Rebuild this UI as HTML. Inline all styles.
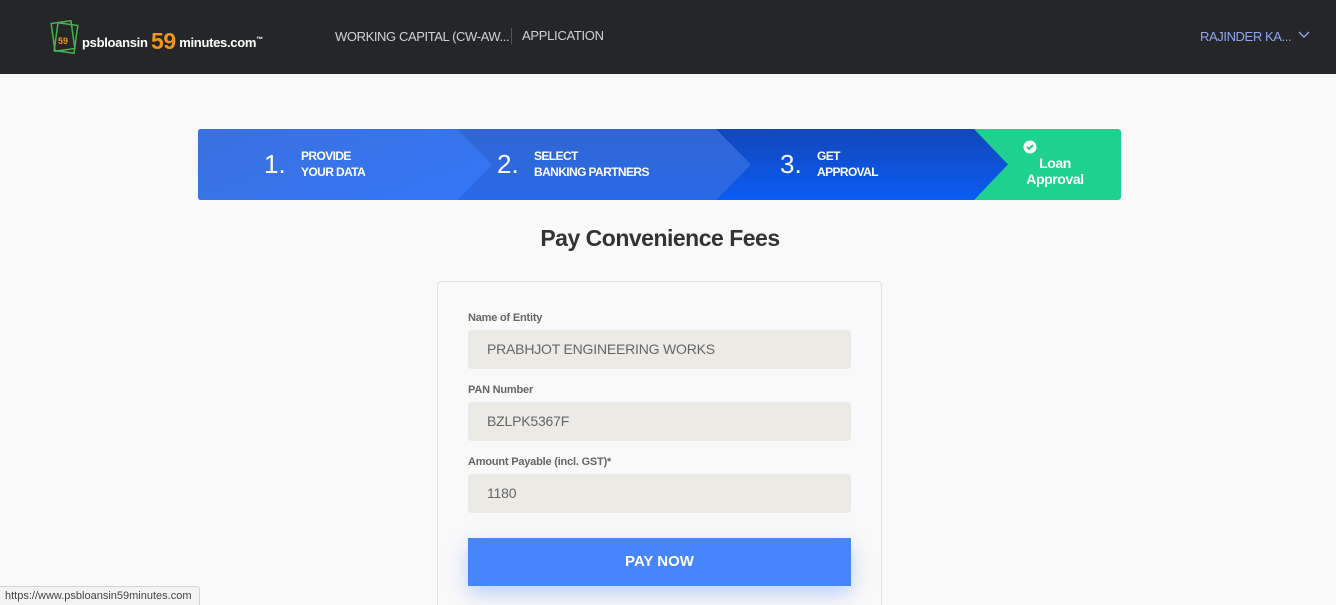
<!DOCTYPE html>
<html style="width:1336px;height:605px;overflow:hidden"><head><meta charset="utf-8"><style>
*{margin:0;padding:0;box-sizing:border-box}
body{width:1336px;height:605px;overflow:hidden;background:#f9f9f9;font-family:"Liberation Sans",sans-serif;position:relative}
.hdr{position:absolute;left:0;top:0;width:1336px;height:74px;background:#252628}
.abs{position:absolute;white-space:nowrap}
.step{position:absolute;top:129px;height:71px;color:#fff}
.num{position:absolute;font-size:26px;top:20px}
.lbl{position:absolute;font-size:12px;font-weight:bold;line-height:16px;top:19px;letter-spacing:-0.6px}
label{position:absolute;left:468px;font-size:11px;font-weight:bold;color:#666;letter-spacing:-0.2px}
.inp{position:absolute;left:468px;width:383px;height:39px;background:#ebeae4;border-radius:4px;font-size:14px;color:#666;padding:11px 19px;letter-spacing:-0.2px}
</style></head><body>
<div class="hdr"></div>
<svg class="abs" style="left:50px;top:20px" width="30" height="34" viewBox="0 0 30 34"><rect x="3" y="2" width="20" height="28" fill="none" stroke="#4caf50" stroke-width="1.5" transform="rotate(-8 13 16)"/><rect x="6" y="4" width="20" height="28" fill="none" stroke="#4caf50" stroke-width="1.5" transform="rotate(8 16 18)"/><text x="8" y="24" font-size="9" font-weight="bold" fill="#f7941d" font-family="Liberation Sans">59</text></svg>
<div class="abs" style="left:82px;top:26px;color:#fff;font-size:13px;font-weight:bold;letter-spacing:-0.3px">psbloansin <span style="color:#f7941d;font-size:23px;position:relative;top:2px">59</span> minutes.com<sup style="font-size:7px">™</sup></div>
<div class="abs" style="left:335px;top:29px;color:#cfd2d8;font-size:13px;letter-spacing:-0.4px">WORKING CAPITAL (CW-AW...</div>
<div class="abs" style="left:511px;top:28px;width:1px;height:16px;background:#555"></div>
<div class="abs" style="left:522px;top:28px;color:#cfd2d8;font-size:13px;letter-spacing:-0.3px">APPLICATION</div>
<div class="abs" style="left:1200px;top:29px;color:#8fa6f0;font-size:13px;letter-spacing:-0.4px">RAJINDER KA...</div>
<svg class="abs" style="left:1298px;top:31px" width="12" height="8"><path d="M1 1l5 5 5-5" stroke="#8fa6f0" fill="none" stroke-width="1.4"/></svg>

<div class="step" style="left:198px;width:923px;background:#1ed18e;border-radius:3px"></div>
<div class="step" style="left:198px;width:810px;background:linear-gradient(180deg,#1247b8,#0a5cf5);clip-path:polygon(0 0,776px 0,810px 50%,776px 100%,0 100%);border-radius:3px 0 0 3px"></div>
<div class="step" style="left:198px;width:553px;background:linear-gradient(180deg,#3066d4,#2a69e6);clip-path:polygon(0 0,518px 0,553px 50%,518px 100%,0 100%);border-radius:3px 0 0 3px"></div>
<div class="step" style="left:198px;width:294px;background:linear-gradient(160deg,#3b70de,#3477f7);clip-path:polygon(0 0,259px 0,294px 50%,259px 100%,0 100%);border-radius:3px 0 0 3px"></div>
<div class="step" style="left:198px;width:923px">
<div class="num" style="left:66px">1.</div><div class="lbl" style="left:103px">PROVIDE<br>YOUR DATA</div>
<div class="num" style="left:299px">2.</div><div class="lbl" style="left:336px">SELECT<br>BANKING PARTNERS</div>
<div class="num" style="left:582px">3.</div><div class="lbl" style="left:619px">GET<br>APPROVAL</div>
<svg style="position:absolute;left:825px;top:11px" width="14" height="14"><circle cx="7" cy="7" r="6.5" fill="#fff"/><path d="M4 7l2 2 4-4" stroke="#1ed18e" stroke-width="2" fill="none"/></svg>
<div style="position:absolute;left:820px;top:26px;width:74px;text-align:center;font-size:14px;font-weight:bold;line-height:16px;letter-spacing:-0.4px">Loan<br>Approval</div>
</div>

<div class="abs" style="left:0;width:1320px;text-align:center;top:225px;font-size:23px;font-weight:bold;color:#333;letter-spacing:-0.5px">Pay Convenience Fees</div>
<div class="abs" style="left:437px;top:281px;width:445px;height:340px;border:1px solid #e2e2e2;border-radius:4px;background:#f9f9f9"></div>
<label style="top:312px">Name of Entity</label>
<div class="inp" style="top:330px">PRABHJOT ENGINEERING WORKS</div>
<label style="top:384px">PAN Number</label>
<div class="inp" style="top:402px">BZLPK5367F</div>
<label style="top:456px">Amount Payable (incl. GST)*</label>
<div class="inp" style="top:474px">1180</div>
<div class="abs" style="left:468px;top:538px;width:383px;height:48px;background:#4785fd;box-shadow:0 8px 20px rgba(71,133,253,.35);color:#fff;font-weight:bold;font-size:15px;text-align:center;line-height:48px">PAY NOW</div>
<div class="abs" style="left:-4px;top:586px;height:20px;padding:3px 8px;background:#f3f3f3;border:1px solid #d4d4d4;border-radius:0 3px 0 0;font-size:11px;color:#444">https://www.psbloansin59minutes.com</div>
</body></html>
